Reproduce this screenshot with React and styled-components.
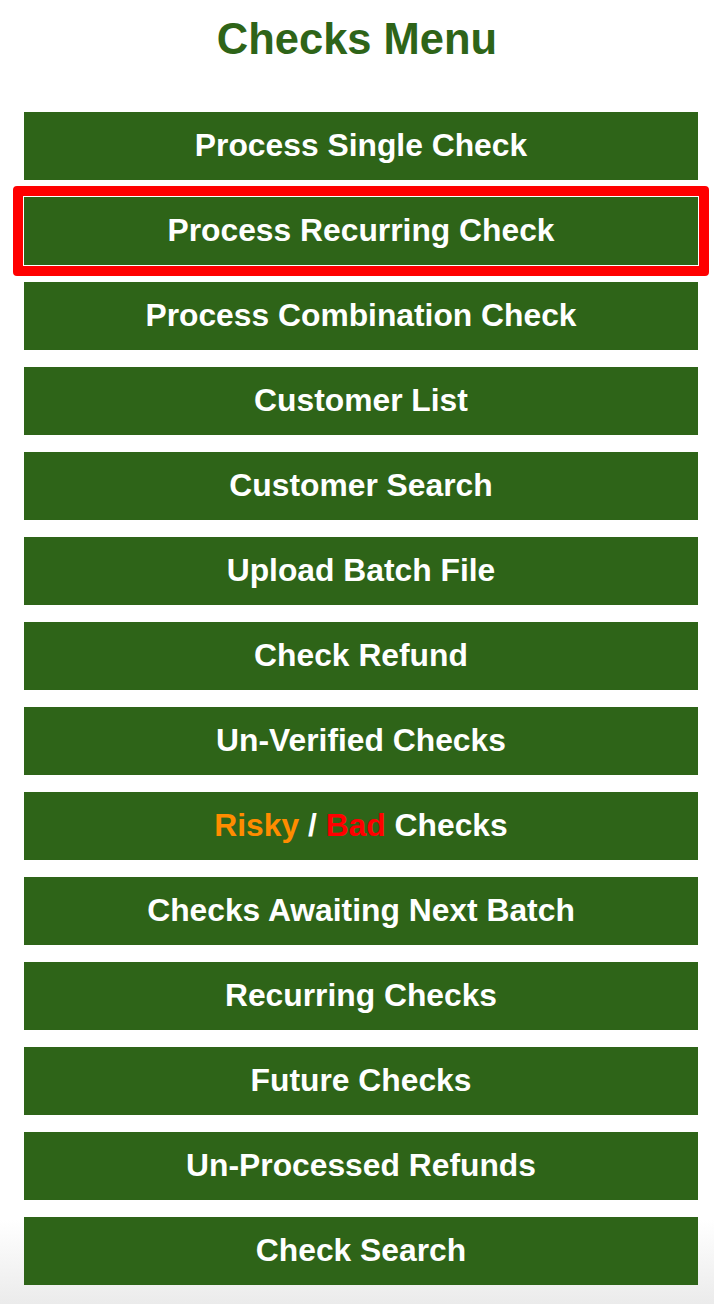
import React from "react";
import styled, { createGlobalStyle } from "styled-components";

const GlobalStyle = createGlobalStyle`
  html {
    min-height: 100%;
  }
  body {
    margin: 0;
    min-height: 1304px;
    font-family: "Liberation Sans", Arial, sans-serif;
    background: linear-gradient(to bottom, #ffffff 0, #ffffff 1220px, #ebebeb 1304px);
  }
`;

const items = [
  { label: "Process Single Check" },
  { label: "Process Recurring Check", focused: true },
  { label: "Process Combination Check" },
  { label: "Customer List" },
  { label: "Customer Search" },
  { label: "Upload Batch File" },
  { label: "Check Refund" },
  { label: "Un-Verified Checks" },
  { label: "risky" },
  { label: "Checks Awaiting Next Batch" },
  { label: "Recurring Checks" },
  { label: "Future Checks" },
  { label: "Un-Processed Refunds" },
  { label: "Check Search" },
];

function App() {
  return (
    <Page>
      <GlobalStyle />
      <Title>Checks Menu</Title>
      <Menu>
        {items.map((item) => (
          <MenuButton key={item.label} $focused={item.focused}>
            {item.label === "risky" ? (
              <>
                <Tone $color="#ff8c00">Risky</Tone> / <Tone $color="#ff0000">Bad</Tone> Checks
              </>
            ) : (
              item.label
            )}
          </MenuButton>
        ))}
      </Menu>
    </Page>
  );
}

export default App;

const Page = styled.div`
  padding: 18px 16px 19px 24px;
`;

const Title = styled.h1`
  margin: 0 0 51px -8px;
  font-size: 43.5px;
  line-height: 43px;
  font-weight: bold;
  color: #2e6418;
  text-align: center;
`;

const Menu = styled.div`
  display: flex;
  flex-direction: column;
  gap: 17px;
`;

const MenuButton = styled.div`
  position: relative;
  height: 68px;
  line-height: 66px;
  background: #2e6418;
  color: #ffffff;
  font-size: 31.8px;
  font-weight: bold;
  text-align: center;
  cursor: pointer;
  box-shadow: ${(p) => (p.$focused ? "0 0 0 1px #ffffff" : "none")};

  &::after {
    content: "";
    display: ${(p) => (p.$focused ? "block" : "none")};
    position: absolute;
    inset: -11px;
    border: 10px solid #ff0000;
    border-radius: 4px;
    pointer-events: none;
  }
`;

const Tone = styled.span`
  color: ${(p) => p.$color};
`;
